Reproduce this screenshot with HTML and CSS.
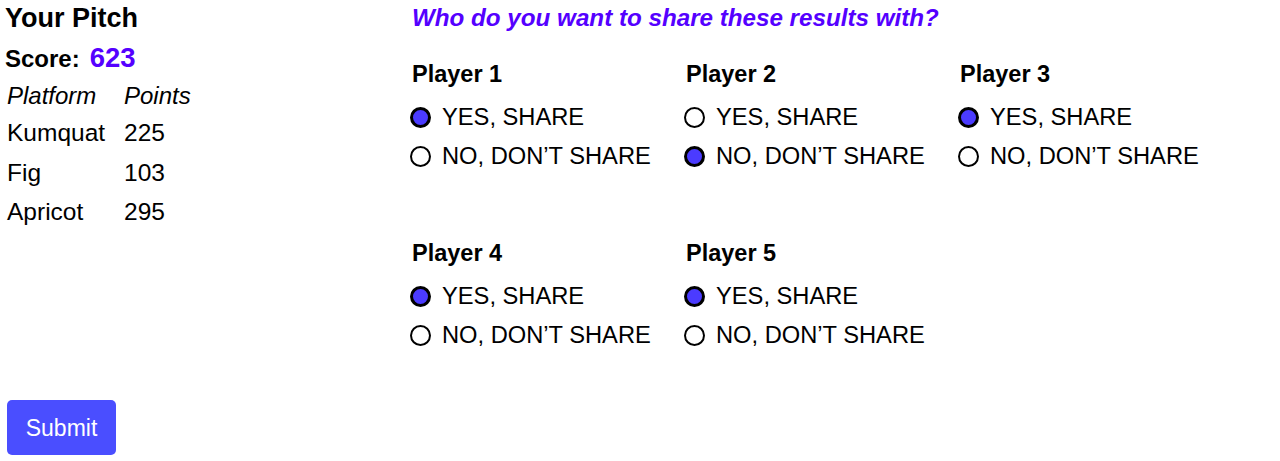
FILE: index.html
```html
<!DOCTYPE html>
<html>
<head>
<meta charset="utf-8">
<link rel="stylesheet" href="styles.css">
</head>
<body>
<div class="page">
  <div class="left">
    <h2 class="title">Your Pitch</h2>
    <div class="score"><span class="score-label">Score:</span><span class="score-value">623</span></div>
    <table class="points">
      <thead><tr><th>Platform</th><th>Points</th></tr></thead>
      <tbody>
        <tr><td>Kumquat</td><td>225</td></tr>
        <tr><td>Fig</td><td>103</td></tr>
        <tr><td>Apricot</td><td>295</td></tr>
      </tbody>
    </table>
    <button class="submit" type="button">Submit</button>
  </div>
  <div class="right">
    <h3 class="question">Who do you want to share these results with?</h3>
    <div class="players">
      <div class="player">
        <div class="player-name">Player 1</div>
        <label class="opt"><input type="radio" name="p1" checked> YES, SHARE</label>
        <label class="opt"><input type="radio" name="p1"> NO, DON’T SHARE</label>
      </div>
      <div class="player">
        <div class="player-name">Player 2</div>
        <label class="opt"><input type="radio" name="p2"> YES, SHARE</label>
        <label class="opt"><input type="radio" name="p2" checked> NO, DON’T SHARE</label>
      </div>
      <div class="player">
        <div class="player-name">Player 3</div>
        <label class="opt"><input type="radio" name="p3" checked> YES, SHARE</label>
        <label class="opt"><input type="radio" name="p3"> NO, DON’T SHARE</label>
      </div>
      <div class="player">
        <div class="player-name">Player 4</div>
        <label class="opt"><input type="radio" name="p4" checked> YES, SHARE</label>
        <label class="opt"><input type="radio" name="p4"> NO, DON’T SHARE</label>
      </div>
      <div class="player">
        <div class="player-name">Player 5</div>
        <label class="opt"><input type="radio" name="p5" checked> YES, SHARE</label>
        <label class="opt"><input type="radio" name="p5"> NO, DON’T SHARE</label>
      </div>
    </div>
  </div>
</div>
</body>
</html>
```
FILE: styles.css
```css
* { box-sizing: border-box; }
html, body { margin: 0; padding: 0; background: #fff; }
body {
  font-family: "Liberation Sans", Arial, Helvetica, sans-serif;
  color: #000;
  font-size: 24px;
}
.page {
  display: grid;
  grid-template-columns: 405px 1fr;
  padding-left: 5px;
}
.left { display: flex; flex-direction: column; align-items: flex-start; }
.title {
  margin: 0;
  font-size: 27px;
  line-height: 36px;
  font-weight: 700;
}
.score {
  margin-top: 2px;
  line-height: 40px;
  display: flex;
  align-items: baseline;
  gap: 10px;
}
.score-label { font-weight: 700; font-size: 24px; }
.score-value { font-weight: 700; font-size: 27.5px; color: #5500ff; }
.points {
  border-collapse: collapse;
  font-size: 24.5px;
  margin-left: 2px;
  margin-top: -1px;
}
.points th, .points td {
  padding: 0;
  text-align: left;
}
.points th {
  font-style: italic;
  font-weight: 400;
  font-size: 24px;
  line-height: 35px;
}
.points td { line-height: 39.5px; }
.points th:first-child, .points td:first-child { width: 117px; }
.submit {
  margin-top: 168px;
  margin-left: 2px;
  width: 109px;
  height: 55px;
  border: none;
  border-radius: 5px;
  background: #4a4eff;
  color: #fff;
  font-family: "Liberation Sans", Arial, sans-serif;
  font-size: 23px;
  padding: 3px 0 0 0;
}
.question {
  margin: 0;
  padding-left: 2px;
  font-size: 24.2px;
  line-height: 36px;
  font-weight: 700;
  font-style: italic;
  color: #5500ff;
}
.players {
  margin-top: 20px;
  display: grid;
  grid-template-columns: repeat(3, 274px);
  row-gap: 59px;
}
.player { display: flex; flex-direction: column; }
.player-name {
  padding-left: 2px;
  font-weight: 700;
  font-size: 23.5px;
  line-height: 36px;
  margin-bottom: 6px;
}
.opt {
  display: flex;
  align-items: center;
  gap: 11px;
  height: 39px;
  font-size: 23.7px;
  white-space: nowrap;
}
.opt input {
  appearance: none;
  -webkit-appearance: none;
  margin: 0;
  width: 21px;
  height: 21px;
  border: 2px solid #000;
  border-radius: 50%;
  background: #fff;
  flex: none;
}
.opt input:checked {
  border-width: 3px;
  background: #4b3bff;
}
```
